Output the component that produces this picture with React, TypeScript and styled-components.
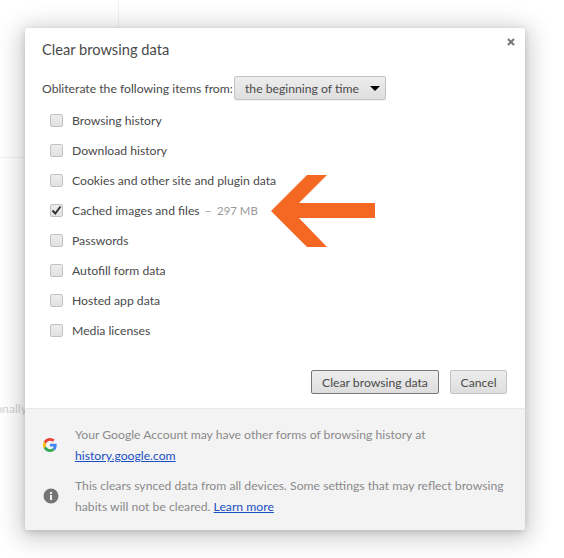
import React from "react";
import styled, { createGlobalStyle } from "styled-components";

const GlobalStyle = createGlobalStyle`
  html, body {
    margin: 0;
    padding: 0;
    background: #fff;
  }
  body {
    font-family: Lato, "Open Sans", "Liberation Sans", sans-serif;
    font-size: 12.2px;
    color: #4a4a4a;
  }
`;

const Page = styled.div`
  position: relative;
  width: 564px;
  height: 558px;
  padding: 28px 0 0 25px;
  box-sizing: border-box;
  overflow: hidden;
`;

const PageLineV = styled.div`
  position: absolute;
  left: 118px;
  top: 0;
  width: 1px;
  height: 28px;
  background: #f1f1f1;
`;

const PageLineH = styled.div`
  position: absolute;
  left: 0;
  top: 157px;
  width: 25px;
  height: 1px;
  background: #f1f1f1;
`;

const PageText = styled.div`
  position: absolute;
  right: 537px;
  top: 401px;
  line-height: 16px;
  color: #d4d4d4;
  white-space: nowrap;
`;

const Dialog = styled.div`
  position: relative;
  width: 500px;
  height: 502px;
  display: flex;
  flex-direction: column;
  background: #fff;
  border-radius: 3px;
  box-shadow: 0 4px 23px 5px rgba(0, 0, 0, 0.2), 0 2px 6px rgba(0, 0, 0, 0.15);
  overflow: hidden;
`;

const Close = styled.svg`
  position: absolute;
  top: 10px;
  right: 10px;
  width: 8px;
  height: 8px;
`;

const Arrow = styled.svg`
  position: absolute;
  left: 246px;
  top: 147px;
  width: 104px;
  height: 72px;
`;

const Body = styled.div`
  flex: 1;
  display: flex;
  flex-direction: column;
  padding: 12px 18px 0 17px;
`;

const Title = styled.h1`
  margin: 0;
  font-size: 14.65px;
  line-height: 20px;
  font-weight: 400;
  color: inherit;
`;

const PeriodRow = styled.div`
  display: flex;
  align-items: center;
  margin-top: 16px;
`;

const PeriodLabel = styled.span`
  width: 192px;
  white-space: nowrap;
`;

const Select = styled.div`
  width: 152px;
  height: 24px;
  box-sizing: border-box;
  display: flex;
  align-items: center;
  justify-content: space-between;
  padding: 0 5px 0 10px;
  border: 1px solid #c4c4c4;
  border-radius: 2px;
  background: linear-gradient(#ededed, #dedede);
  box-shadow: 0 1px 0 rgba(0, 0, 0, 0.05);
`;

const Caret = styled.span`
  width: 0;
  height: 0;
  border-left: 5px solid transparent;
  border-right: 5px solid transparent;
  border-top: 5px solid #000;
`;

const Options = styled.div`
  display: flex;
  flex-direction: column;
  margin-top: 5px;
`;

const Option = styled.div`
  height: 30px;
  display: flex;
  align-items: center;
  padding-left: 8px;
  gap: 9px;
`;

const Box = styled.span`
  flex: none;
  width: 13px;
  height: 13px;
  box-sizing: border-box;
  display: flex;
  align-items: center;
  justify-content: center;
  border: 1px solid #c2c2c2;
  border-radius: 2px;
  background: linear-gradient(#ededed, #e2e2e2);
`;

const Tick = styled.svg`
  flex: none;
  width: 11px;
  height: 11px;
`;

const Size = styled.span`
  margin-left: 5px;
  font-size: 11.4px;
  color: #999;
  white-space: pre;
`;

const Actions = styled.div`
  display: flex;
  justify-content: flex-end;
  gap: 11px;
  margin-top: 25px;
`;

const Button = styled.button<{ $primary?: boolean }>`
  height: 24px;
  padding: 0;
  width: ${(p) => (p.$primary ? "128px" : "57px")};
  box-sizing: border-box;
  border: 1px solid ${(p) => (p.$primary ? "#777" : "#c4c4c4")};
  border-radius: 2px;
  background: linear-gradient(#ededed, #dedede);
  font-family: inherit;
  font-size: inherit;
  color: inherit;
`;

const Footer = styled.div`
  height: 122px;
  box-sizing: border-box;
  display: flex;
  flex-direction: column;
  gap: 9px;
  padding: 15px 20px 0 18px;
  background: #f3f3f3;
  border-top: 1px solid #e8e8e8;
`;

const Note = styled.div`
  display: grid;
  grid-template-columns: 14px 1fr;
  column-gap: 18px;
  align-items: center;
`;

const NoteText = styled.p`
  margin: 0;
  line-height: 21px;
  color: #8a8a8a;
  white-space: nowrap;
`;

const NoteLink = styled.a`
  color: #1a4fc4;
  text-decoration: underline;
`;

const Logo = styled.svg`
  width: 14px;
  height: 14px;
`;

const Info = styled.svg`
  width: 16px;
  height: 16px;
`;

const items = [
  { label: "Browsing history" },
  { label: "Download history" },
  { label: "Cookies and other site and plugin data" },
  { label: "Cached images and files", checked: true, size: "–  297 MB" },
  { label: "Passwords" },
  { label: "Autofill form data" },
  { label: "Hosted app data" },
  { label: "Media licenses" },
];

export default function App() {
  return (
    <>
      <GlobalStyle />
      <Page>
        <PageLineV />
        <PageLineH />
        <PageText>Additionally</PageText>
        <Dialog>
          <Close viewBox="0 0 8 8">
            <path d="M1 1l6 6M7 1L1 7" stroke="#777" strokeWidth="2" />
          </Close>
          <Body>
            <Title>Clear browsing data</Title>
            <PeriodRow>
              <PeriodLabel>Obliterate the following items from:</PeriodLabel>
              <Select>
                <span>the beginning of time</span>
                <Caret />
              </Select>
            </PeriodRow>
            <Options>
              {items.map((item) => (
                <Option key={item.label}>
                  <Box>
                    {item.checked && (
                      <Tick viewBox="0 0 11 11">
                        <path d="M1.5 5.5l2.8 3L9.5 1.5" fill="none" stroke="#333" strokeWidth="2" />
                      </Tick>
                    )}
                  </Box>
                  <span>
                    {item.label}
                    {item.size && <Size>{item.size}</Size>}
                  </span>
                </Option>
              ))}
            </Options>
            <Actions>
              <Button $primary>Clear browsing data</Button>
              <Button>Cancel</Button>
            </Actions>
          </Body>
          <Footer>
            <Note>
              <Logo viewBox="0 0 48 48">
                <path fill="#EA4335" d="M24 9.5c3.54 0 6.71 1.22 9.21 3.6l6.85-6.85C35.9 2.38 30.47 0 24 0 14.62 0 6.51 5.38 2.56 13.22l7.98 6.19C12.43 13.72 17.74 9.5 24 9.5z" />
                <path fill="#4285F4" d="M46.98 24.55c0-1.57-.15-3.09-.38-4.55H24v9.02h12.94c-.58 2.96-2.26 5.48-4.78 7.18l7.73 6c4.51-4.18 7.09-10.36 7.09-17.65z" />
                <path fill="#FBBC05" d="M10.53 28.59c-.48-1.45-.76-2.99-.76-4.59s.27-3.14.76-4.59l-7.98-6.19C.92 16.46 0 20.12 0 24c0 3.88.92 7.54 2.56 10.78l7.97-6.19z" />
                <path fill="#34A853" d="M24 48c6.48 0 11.93-2.13 15.89-5.81l-7.73-6c-2.15 1.45-4.92 2.3-8.16 2.3-6.26 0-11.57-4.22-13.47-9.91l-7.98 6.19C6.51 42.62 14.62 48 24 48z" />
              </Logo>
              <NoteText>
                Your Google Account may have other forms of browsing history at
                <br />
                <NoteLink>history.google.com</NoteLink>
              </NoteText>
            </Note>
            <Note>
              <Info viewBox="0 0 16 16">
                <circle cx="8" cy="8" r="7.5" fill="#757575" />
                <rect x="7" y="7" width="2" height="5" fill="#f3f3f3" />
                <rect x="7" y="4" width="2" height="2" fill="#f3f3f3" />
              </Info>
              <NoteText>
                This clears synced data from all devices. Some settings that may reflect browsing
                <br />
                habits will not be cleared. <NoteLink>Learn more</NoteLink>
              </NoteText>
            </Note>
          </Footer>
          <Arrow viewBox="0 0 104 72">
            <path fill="#f56823" d="M0 36 36 0h20L28 28h76v15H28l28 29H36z" />
          </Arrow>
        </Dialog>
      </Page>
    </>
  );
}
